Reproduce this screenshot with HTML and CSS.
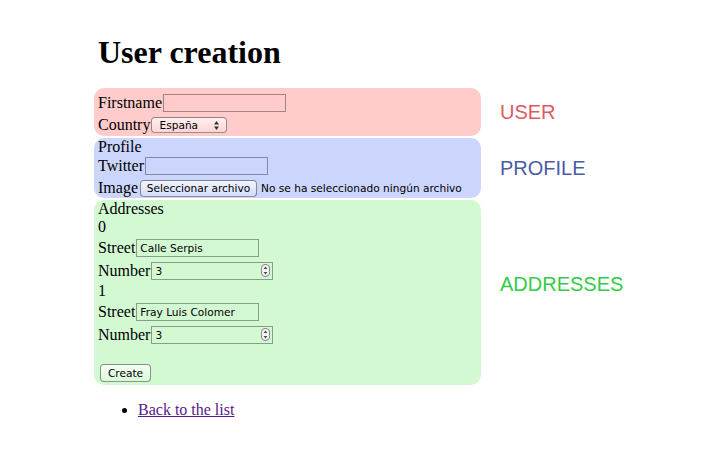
FILE: index.html
```html
<!DOCTYPE html>
<html>
<head>
<meta charset="utf-8">
<title>User creation</title>
<link rel="stylesheet" href="styles.css">
</head>
<body>
<div class="page">
  <h1 class="title">User creation</h1>
  <form class="form">
    <div class="section">
      <div class="box box-user">
        <div class="row row-tall"><label class="lbl">Firstname</label><input class="text" type="text"></div>
        <div class="row"><label class="lbl">Country</label><span class="select"><span class="select-val">España</span><svg class="select-arrows" width="5" height="9" viewBox="0 0 5 9"><polygon points="2.5,0 5,3.5 0,3.5" fill="#333"/><polygon points="0,5.5 5,5.5 2.5,9" fill="#333"/></svg></span></div>
      </div>
      <div class="tag tag-user">USER</div>
    </div>
    <div class="section">
      <div class="box box-profile">
        <div class="line line-profile">Profile</div>
        <div class="row"><label class="lbl">Twitter</label><input class="text" type="text"></div>
        <div class="row row-short"><label class="lbl">Image</label><span class="btn btn-file">Seleccionar archivo</span><span class="nofile">No se ha seleccionado ningún archivo</span></div>
      </div>
      <div class="tag tag-profile">PROFILE</div>
    </div>
    <div class="section">
      <div class="box box-addr">
        <div class="line">Addresses</div>
        <div class="line">0</div>
        <div class="row row-tall"><label class="lbl">Street</label><input class="text" type="text" value="Calle Serpis"></div>
        <div class="row row-tall"><label class="lbl">Number</label><span class="numbox"><span class="num-val">3</span><svg class="spin" width="9" height="13" viewBox="0 0 9 13"><rect x="0.5" y="0.5" width="8" height="12" rx="3.5" fill="#f2f2f2" stroke="#8a8a8a"/><polygon points="4.5,2.6 6.3,5 2.7,5" fill="#444"/><polygon points="2.7,8 6.3,8 4.5,10.4" fill="#444"/></svg></span></div>
        <div class="line">1</div>
        <div class="row row-tall"><label class="lbl">Street</label><input class="text" type="text" value="Fray Luis Colomer"></div>
        <div class="row row-tall"><label class="lbl">Number</label><span class="numbox"><span class="num-val">3</span><svg class="spin" width="9" height="13" viewBox="0 0 9 13"><rect x="0.5" y="0.5" width="8" height="12" rx="3.5" fill="#f2f2f2" stroke="#8a8a8a"/><polygon points="4.5,2.6 6.3,5 2.7,5" fill="#444"/><polygon points="2.7,8 6.3,8 4.5,10.4" fill="#444"/></svg></span></div>
        <div class="actions"><span class="btn btn-create">Create</span></div>
      </div>
      <div class="tag tag-addr">ADDRESSES</div>
    </div>
  </form>
  <ul class="links">
    <li><a href="#" class="link">Back to the list</a></li>
  </ul>
</div>
</body>
</html>
```

FILE: styles.css
```css
body {
  margin: 0;
  background: #fff;
  color: #000;
  font-family: "Liberation Serif", "Times New Roman", serif;
  font-size: 16px;
}

.page {
  padding-left: 94px;
}

.title {
  margin: 0 0 17px 0;
  padding: 34px 0 0 4px;
  font-size: 32px;
  line-height: 37px;
  font-weight: bold;
}

.form {
  margin: 0;
}

.section {
  display: flex;
  align-items: center;
  margin-bottom: 2px;
}

.box {
  width: 387px;
  box-sizing: border-box;
  padding-left: 4px;
  border-radius: 10px;
}

.box-user {
  background: #ffcbcb;
  padding-top: 3px;
}

.box-profile {
  background: #ccd6fd;
}

.box-addr {
  background: #d3f9d3;
}

.row {
  display: flex;
  align-items: center;
  gap: 1px;
  height: 22px;
}

.row-tall {
  height: 23px;
}

.row-short {
  height: 21px;
}

.lbl {
  line-height: 18px;
}

.line {
  height: 18px;
  line-height: 18px;
}

.line-profile {
  height: 17px;
  line-height: 17px;
}

.text {
  width: 123px;
  height: 18px;
  box-sizing: border-box;
  margin: 0;
  padding: 0 3px;
  border: 1px solid rgba(0, 0, 0, 0.36);
  background: transparent;
  font-family: "DejaVu Sans", sans-serif;
  font-size: 10.6px;
  color: #000;
  outline: none;
}

.select {
  display: flex;
  align-items: center;
  justify-content: space-between;
  width: 76px;
  height: 16px;
  box-sizing: border-box;
  padding: 0 7px 0 7px;
  border: 1px solid rgba(0, 0, 0, 0.4);
  border-radius: 4px;
  background: linear-gradient(rgba(255, 255, 255, 0.7), rgba(255, 255, 255, 0.2));
  font-family: "DejaVu Sans", sans-serif;
  font-size: 10.6px;
}

.select-arrows {
  display: block;
}

.btn {
  display: inline-flex;
  align-items: center;
  justify-content: center;
  box-sizing: border-box;
  border: 1px solid rgba(0, 0, 0, 0.42);
  border-radius: 4px;
  background: linear-gradient(rgba(255, 255, 255, 0.75), rgba(255, 255, 255, 0.15));
  font-family: "DejaVu Sans", sans-serif;
  font-size: 10.6px;
  color: #000;
}

.btn-file {
  width: 117px;
  height: 17px;
  margin-top: 1px;
  margin-left: 1px;
}

.nofile {
  margin-left: 3px;
  margin-top: 1px;
  font-family: "DejaVu Sans", sans-serif;
  font-size: 10.6px;
}

.numbox {
  display: flex;
  align-items: center;
  justify-content: space-between;
  width: 122px;
  height: 18px;
  box-sizing: border-box;
  padding: 0 2px 0 3px;
  border: 1px solid rgba(0, 0, 0, 0.36);
  font-family: "DejaVu Sans", sans-serif;
  font-size: 10.6px;
}

.spin {
  display: block;
}

.actions {
  display: flex;
  align-items: center;
  height: 24px;
  margin-top: 15px;
}

.btn-create {
  width: 51px;
  height: 18px;
  margin-left: 2px;
}

.tag {
  margin-left: 19px;
  font-family: "Liberation Sans", Arial, sans-serif;
  font-size: 20px;
  line-height: 23px;
}

.tag-user {
  color: #dd5b60;
}

.tag-profile {
  color: #4a5ba6;
}

.tag-addr {
  color: #33cc47;
  padding-bottom: 16px;
}

.links {
  margin: 16px 0;
  padding-left: 44px;
}

.link {
  color: #551a8b;
}
```
